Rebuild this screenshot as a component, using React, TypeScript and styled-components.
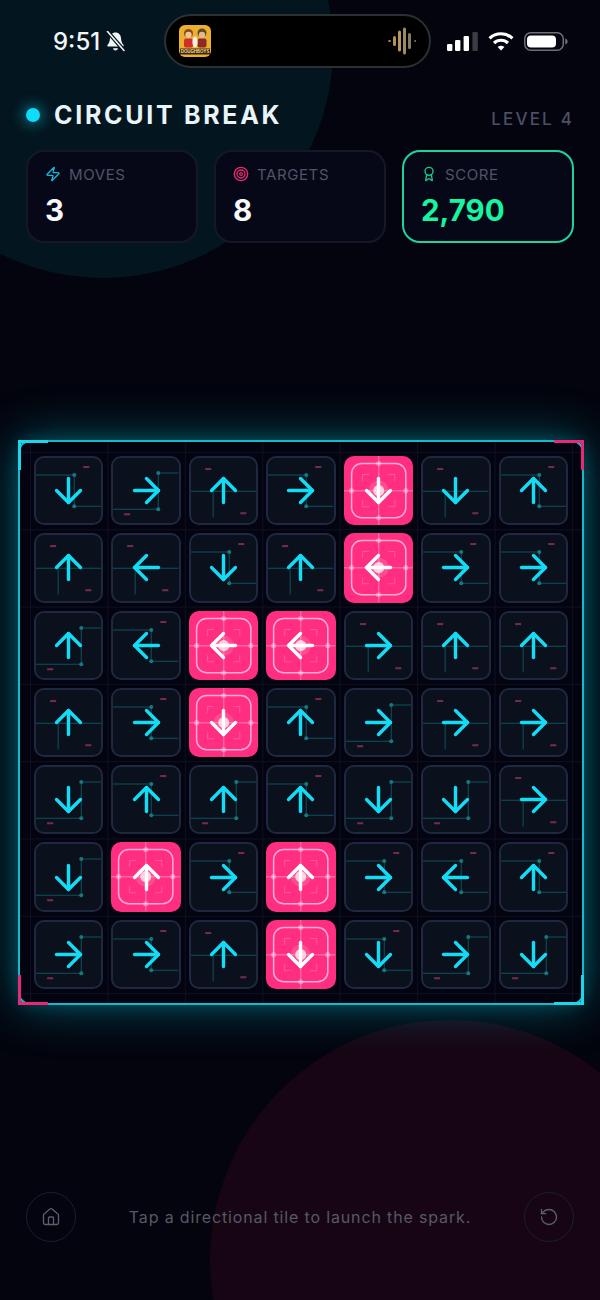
import styled, { createGlobalStyle } from 'styled-components';
import { ArrowDown, ArrowLeft, ArrowRight, ArrowUp, Award, House, RotateCcw, Target, Zap } from 'lucide-react';

const GlobalStyle = createGlobalStyle`
  * { box-sizing: border-box; }
  html, body { margin: 0; padding: 0; background: #03040d; }
  body { font-family: Inter, "Liberation Sans", sans-serif; }
`;

const Page = styled.div`
  position: relative;
  width: 600px;
  height: 1300px;
  overflow: hidden;
  background: #03040d;
  padding: 14px 26px 0;
`;

const Blob = styled.div<{ $size: number; $x: number; $y: number; $color: string }>`
  position: absolute;
  left: ${(p) => p.$x}px;
  top: ${(p) => p.$y}px;
  width: ${(p) => p.$size}px;
  height: ${(p) => p.$size}px;
  border-radius: 50%;
  background: ${(p) => p.$color};
`;

const Content = styled.div`
  position: relative;
`;

const StatusBar = styled.div`
  display: grid;
  grid-template-columns: 138px 267px 1fr;
  align-items: center;
  height: 54px;
`;

const TimeGroup = styled.div`
  display: flex;
  align-items: center;
  gap: 6px;
  padding-left: 27px;
  color: #f2f4f6;
  font-size: 24px;
  font-weight: 500;
`;

const Island = styled.div`
  display: flex;
  align-items: center;
  justify-content: space-between;
  height: 54px;
  padding: 0 13px 0 13px;
  background: #000;
  border: 2px solid #2b3032;
  border-radius: 27px;
`;

const StatusIcons = styled.div`
  display: flex;
  align-items: center;
  gap: 10px;
  padding-left: 16px;
`;

const Header = styled.div`
  display: flex;
  align-items: flex-end;
  justify-content: space-between;
  margin-top: 32px;
`;

const TitleGroup = styled.div`
  display: flex;
  align-items: center;
  gap: 14px;
`;

const StatusDot = styled.span`
  width: 14px;
  height: 14px;
  border-radius: 50%;
  background: #0fdcfb;
  box-shadow: 0 0 14px 3px rgba(15, 220, 251, 0.45);
`;

const Title = styled.h1`
  margin: 0;
  color: #e9f4f8;
  font-size: 25px;
  line-height: 30px;
  font-weight: 700;
  letter-spacing: 2.7px;
`;

const Level = styled.div`
  color: #4b5066;
  font-size: 17px;
  line-height: 22px;
  font-weight: 500;
  letter-spacing: 2.2px;
`;

const Stats = styled.div`
  display: grid;
  grid-template-columns: repeat(3, 172px);
  gap: 16px;
  margin-top: 20px;
`;

const StatCard = styled.div<{ $active?: boolean }>`
  height: 93px;
  padding: 12px 17px;
  background: #070817;
  border: 2px solid ${(p) => (p.$active ? '#1fd39a' : '#141827')};
  border-radius: 18px;
`;

const StatLabel = styled.div`
  display: flex;
  align-items: center;
  gap: 8px;
  height: 20px;
  color: #4f5469;
  font-size: 15px;
  letter-spacing: 0.6px;
`;

const StatValue = styled.div<{ $active?: boolean }>`
  margin-top: 8px;
  color: ${(p) => (p.$active ? '#16f5a0' : '#f6f8fa')};
  font-size: 29.5px;
  line-height: 36px;
  font-weight: 700;
`;

const Board = styled.div`
  position: relative;
  width: 566px;
  height: 565px;
  margin: 197px -8px 0;
  padding: 10px;
  border: 2px solid #19b9cd;
  border-radius: 12px;
  background-color: #03040f;
  background-image: linear-gradient(#0b1122 1px, transparent 1px), linear-gradient(90deg, #0b1122 1px, transparent 1px);
  background-size: 77.43px 77.3px;
  background-origin: content-box;
  box-shadow: 0 0 16px rgba(0, 225, 250, 0.18), 0 0 50px rgba(0, 225, 250, 0.38);
`;

const Bracket = styled.span<{ $color: string; $v: 'top' | 'bottom'; $h: 'left' | 'right' }>`
  position: absolute;
  ${(p) => p.$v}: -2px;
  ${(p) => p.$h}: -2px;
  width: 30px;
  height: 30px;
  border-${(p) => p.$v}: 3px solid ${(p) => p.$color};
  border-${(p) => p.$h}: 3px solid ${(p) => p.$color};
`;

const Grid = styled.div`
  display: grid;
  grid-template-columns: repeat(7, 1fr);
  grid-template-rows: repeat(7, 1fr);
  height: 100%;
`;

const Cell = styled.div`
  padding: 4px;
`;

const Tile = styled.div<{ $hot?: boolean }>`
  position: relative;
  display: flex;
  align-items: center;
  justify-content: center;
  height: 100%;
  overflow: hidden;
  border-radius: 10px;
  background: ${(p) => (p.$hot ? '#ff2e80' : '#0a111d')};
  border: ${(p) => (p.$hot ? 'none' : '2px solid #1e2840')};
  color: ${(p) => (p.$hot ? '#fff' : '#12dcf6')};
`;

const TileArt = styled.svg`
  position: absolute;
  inset: 0;
  width: 100%;
  height: 100%;
`;

const ArrowSlot = styled.span`
  position: relative;
  display: flex;
`;

const Footer = styled.div`
  display: flex;
  align-items: center;
  justify-content: space-between;
  margin-top: 187px;
`;

const RoundButton = styled.button`
  display: flex;
  align-items: center;
  justify-content: center;
  width: 50px;
  height: 50px;
  padding: 0;
  border: 1.5px solid #1a1e30;
  border-radius: 50%;
  background: transparent;
  color: #5a5f72;
`;

const Hint = styled.div`
  color: #565965;
  font-size: 16px;
  letter-spacing: 0.85px;
`;

const arrows = { u: ArrowUp, d: ArrowDown, l: ArrowLeft, r: ArrowRight };
type Dir = keyof typeof arrows;

const rows = [
  'dA rB uC rA Pd dC uA',
  'uC lC dA uC Pl rA rA',
  'uB lA Pl Pl rC uC uC',
  'uC rA Pd uA rB rC rC',
  'dB uA uB uA dB dB rC',
  'dB Pu rA Pu rA lA uA',
  'rB rA uC Pd dA rB dB',
];

const TRACE = '#0d525c';
const NODE = '#127a80';
const DASH = '#7a2a50';

function Trace({ kind }: { kind: string }) {
  if (kind === 'A') {
    return (
      <TileArt viewBox="0 0 65 65">
        <path d="M0 17H38V48H65" fill="none" stroke={TRACE} strokeWidth="1" />
        <circle cx="38" cy="17" r="2" fill={NODE} />
        <circle cx="38" cy="48" r="2" fill={NODE} />
        <rect x="47" y="8" width="6" height="2" fill={DASH} />
      </TileArt>
    );
  }
  if (kind === 'B') {
    return (
      <TileArt viewBox="0 0 65 65">
        <path d="M65 15H45V51H0" fill="none" stroke={TRACE} strokeWidth="1" />
        <circle cx="45" cy="15" r="2" fill={NODE} />
        <circle cx="45" cy="51" r="2" fill={NODE} />
        <rect x="11" y="55" width="6" height="2" fill={DASH} />
      </TileArt>
    );
  }
  return (
    <TileArt viewBox="0 0 65 65">
      <path d="M0 33H65M22 33V59" fill="none" stroke={TRACE} strokeWidth="1" />
      <rect x="14" y="10" width="6" height="2" fill={DASH} />
      <rect x="49" y="54" width="6" height="2" fill={DASH} />
    </TileArt>
  );
}

function HotArt() {
  return (
    <TileArt viewBox="0 0 69 69">
      <path d="M0 34.5H69M34.5 0V69" stroke="#fff" strokeOpacity="0.26" strokeWidth="1.5" />
      <rect x="7.5" y="7.5" width="54" height="54" rx="10" fill="none" stroke="#fff" strokeOpacity="0.62" strokeWidth="1.5" />
      <path
        d="M18.5 25V18.5H25M44 18.5H50.5V25M50.5 44V50.5H44M25 50.5H18.5V44"
        fill="none"
        stroke="#fff"
        strokeOpacity="0.2"
        strokeWidth="1"
      />
      <g fill="#fff" fillOpacity="0.32">
        <circle cx="34.5" cy="7.5" r="2.6" />
        <circle cx="34.5" cy="61.5" r="2.6" />
        <circle cx="7.5" cy="34.5" r="2.6" />
        <circle cx="61.5" cy="34.5" r="2.6" />
      </g>
      <circle cx="34.5" cy="34.5" r="10" fill="#fff" fillOpacity="0.14" />
      <circle cx="34.5" cy="34.5" r="5.5" fill="#fff" fillOpacity="0.72" />
    </TileArt>
  );
}

function GameTile({ code }: { code: string }) {
  const hot = code[0] === 'P';
  const dir = (hot ? code[1] : code[0]) as Dir;
  const Arrow = arrows[dir];
  return (
    <Cell>
      <Tile $hot={hot}>
        {hot ? <HotArt /> : <Trace kind={code[1]} />}
        <ArrowSlot>
          <Arrow size={41} strokeWidth={2} />
        </ArrowSlot>
      </Tile>
    </Cell>
  );
}

function MutedBell() {
  return (
    <svg width="19" height="21" viewBox="0 0 19 21">
      <path
        d="M9.5 1.5C6 1.5 4.2 4 4 7.2C3.8 10.6 2.8 12.4 1.6 13.8C1 14.6 1.4 15.6 2.4 15.6H16.6C17.6 15.6 18 14.6 17.4 13.8C16.2 12.4 15.2 10.6 15 7.2C14.8 4 13 1.5 9.5 1.5Z"
        fill="#f2f4f6"
      />
      <path d="M7 17.2H12C11.8 18.6 10.8 19.4 9.5 19.4S7.2 18.6 7 17.2Z" fill="#f2f4f6" />
      <path d="M1.5 0.5 18 19.5" stroke="#03151e" strokeWidth="4" />
      <path d="M1.5 0.5 18 19.5" stroke="#f2f4f6" strokeWidth="1.6" strokeLinecap="round" />
    </svg>
  );
}

function AppBadge() {
  return (
    <svg width="32" height="32" viewBox="0 0 32 32">
      <rect width="32" height="32" rx="6" fill="#edb02c" />
      <circle cx="9.5" cy="8.5" r="4.5" fill="#8a4a20" />
      <circle cx="9.5" cy="10" r="3.2" fill="#f0c49a" />
      <rect x="5" y="13.5" width="9" height="9" rx="2" fill="#cf2f2a" />
      <circle cx="23" cy="8" r="4.5" fill="#5b4a2a" />
      <circle cx="23" cy="10" r="3.2" fill="#e4b88e" />
      <rect x="18.5" y="13.5" width="9" height="9" rx="2" fill="#8c2a28" />
      <ellipse cx="16" cy="17" rx="2.6" ry="5.5" fill="#f6efe0" />
      <rect x="1" y="23.5" width="30" height="6" fill="#3a2412" />
      <text x="16" y="28.2" textAnchor="middle" fontSize="4.4" fontWeight="700" fill="#f6d98a" fontFamily="Inter, sans-serif">
        DOUGHBOYS
      </text>
    </svg>
  );
}

function Waveform() {
  const bars: [number, number, string][] = [
    [1, 2, '#a8894f'],
    [6, 10, '#b08f58'],
    [11, 21, '#b59660'],
    [16, 27, '#9c8a62'],
    [21, 16, '#857b62'],
    [27, 2, '#6d6a5c'],
  ];
  return (
    <svg width="29" height="30" viewBox="0 0 29 30">
      {bars.map(([x, h, c]) => (
        <rect key={x} x={x} y={15 - h / 2} width="3" height={h} rx="1.5" fill={c} />
      ))}
    </svg>
  );
}

function SignalIcon() {
  return (
    <svg width="31" height="19" viewBox="0 0 31 19">
      <rect x="0" y="12" width="5.4" height="7" rx="1.2" fill="#fff" />
      <rect x="8" y="8" width="5.4" height="11" rx="1.2" fill="#fff" />
      <rect x="16.6" y="4" width="5.4" height="15" rx="1.2" fill="#fff" />
      <rect x="25.4" y="0" width="5.4" height="19" rx="1.2" fill="#3a3d42" />
    </svg>
  );
}

function WifiIcon() {
  return (
    <svg width="26" height="20" viewBox="0 0 26 20" fill="none" stroke="#fff" strokeWidth="3.2">
      <path d="M1.6 7.4C8 1.2 18 1.2 24.4 7.4" />
      <path d="M6 12C10 8.3 16 8.3 20 12" />
      <path d="M13 19.4 9.6 15.9C11.6 14.2 14.4 14.2 16.4 15.9Z" fill="#fff" stroke="none" />
    </svg>
  );
}

function BatteryIcon() {
  return (
    <svg width="44" height="19" viewBox="0 0 44 19">
      <rect x="0.75" y="0.75" width="38.5" height="17.5" rx="6" fill="none" stroke="#6e7074" strokeWidth="1.5" />
      <rect x="3" y="3.5" width="29" height="12" rx="4" fill="#fff" />
      <path d="M41.2 6.4C43 7 43.6 8.2 43.6 9.5S43 12 41.2 12.6Z" fill="#6e7074" />
    </svg>
  );
}

export default function App() {
  return (
    <Page>
      <GlobalStyle />
      <Blob $size={460} $x={-127} $y={-182} $color="#03151e" />
      <Blob $size={480} $x={210} $y={1020} $color="#170513" />
      <Content>
        <StatusBar>
          <TimeGroup>
            9:51
            <MutedBell />
          </TimeGroup>
          <Island>
            <AppBadge />
            <Waveform />
          </Island>
          <StatusIcons>
            <SignalIcon />
            <WifiIcon />
            <BatteryIcon />
          </StatusIcons>
        </StatusBar>

        <Header>
          <TitleGroup>
            <StatusDot />
            <Title>CIRCUIT BREAK</Title>
          </TitleGroup>
          <Level>LEVEL 4</Level>
        </Header>

        <Stats>
          <StatCard>
            <StatLabel>
              <Zap size={16} color="#16b7d6" />
              MOVES
            </StatLabel>
            <StatValue>3</StatValue>
          </StatCard>
          <StatCard>
            <StatLabel>
              <Target size={16} color="#e62a6e" />
              TARGETS
            </StatLabel>
            <StatValue>8</StatValue>
          </StatCard>
          <StatCard $active>
            <StatLabel>
              <Award size={16} color="#18c98f" />
              SCORE
            </StatLabel>
            <StatValue $active>2,790</StatValue>
          </StatCard>
        </Stats>

        <Board>
          <Grid>
            {rows.flatMap((row, r) =>
              row.split(' ').map((code, c) => <GameTile key={`${r}-${c}`} code={code} />)
            )}
          </Grid>
          <Bracket $v="top" $h="left" $color="#1cd6ec" />
          <Bracket $v="top" $h="right" $color="#e62a78" />
          <Bracket $v="bottom" $h="left" $color="#e62a78" />
          <Bracket $v="bottom" $h="right" $color="#1cd6ec" />
        </Board>

        <Footer>
          <RoundButton aria-label="Home">
            <House size={20} strokeWidth={1.6} />
          </RoundButton>
          <Hint>Tap a directional tile to launch the spark.</Hint>
          <RoundButton aria-label="Restart">
            <RotateCcw size={20} strokeWidth={1.6} />
          </RoundButton>
        </Footer>
      </Content>
    </Page>
  );
}
